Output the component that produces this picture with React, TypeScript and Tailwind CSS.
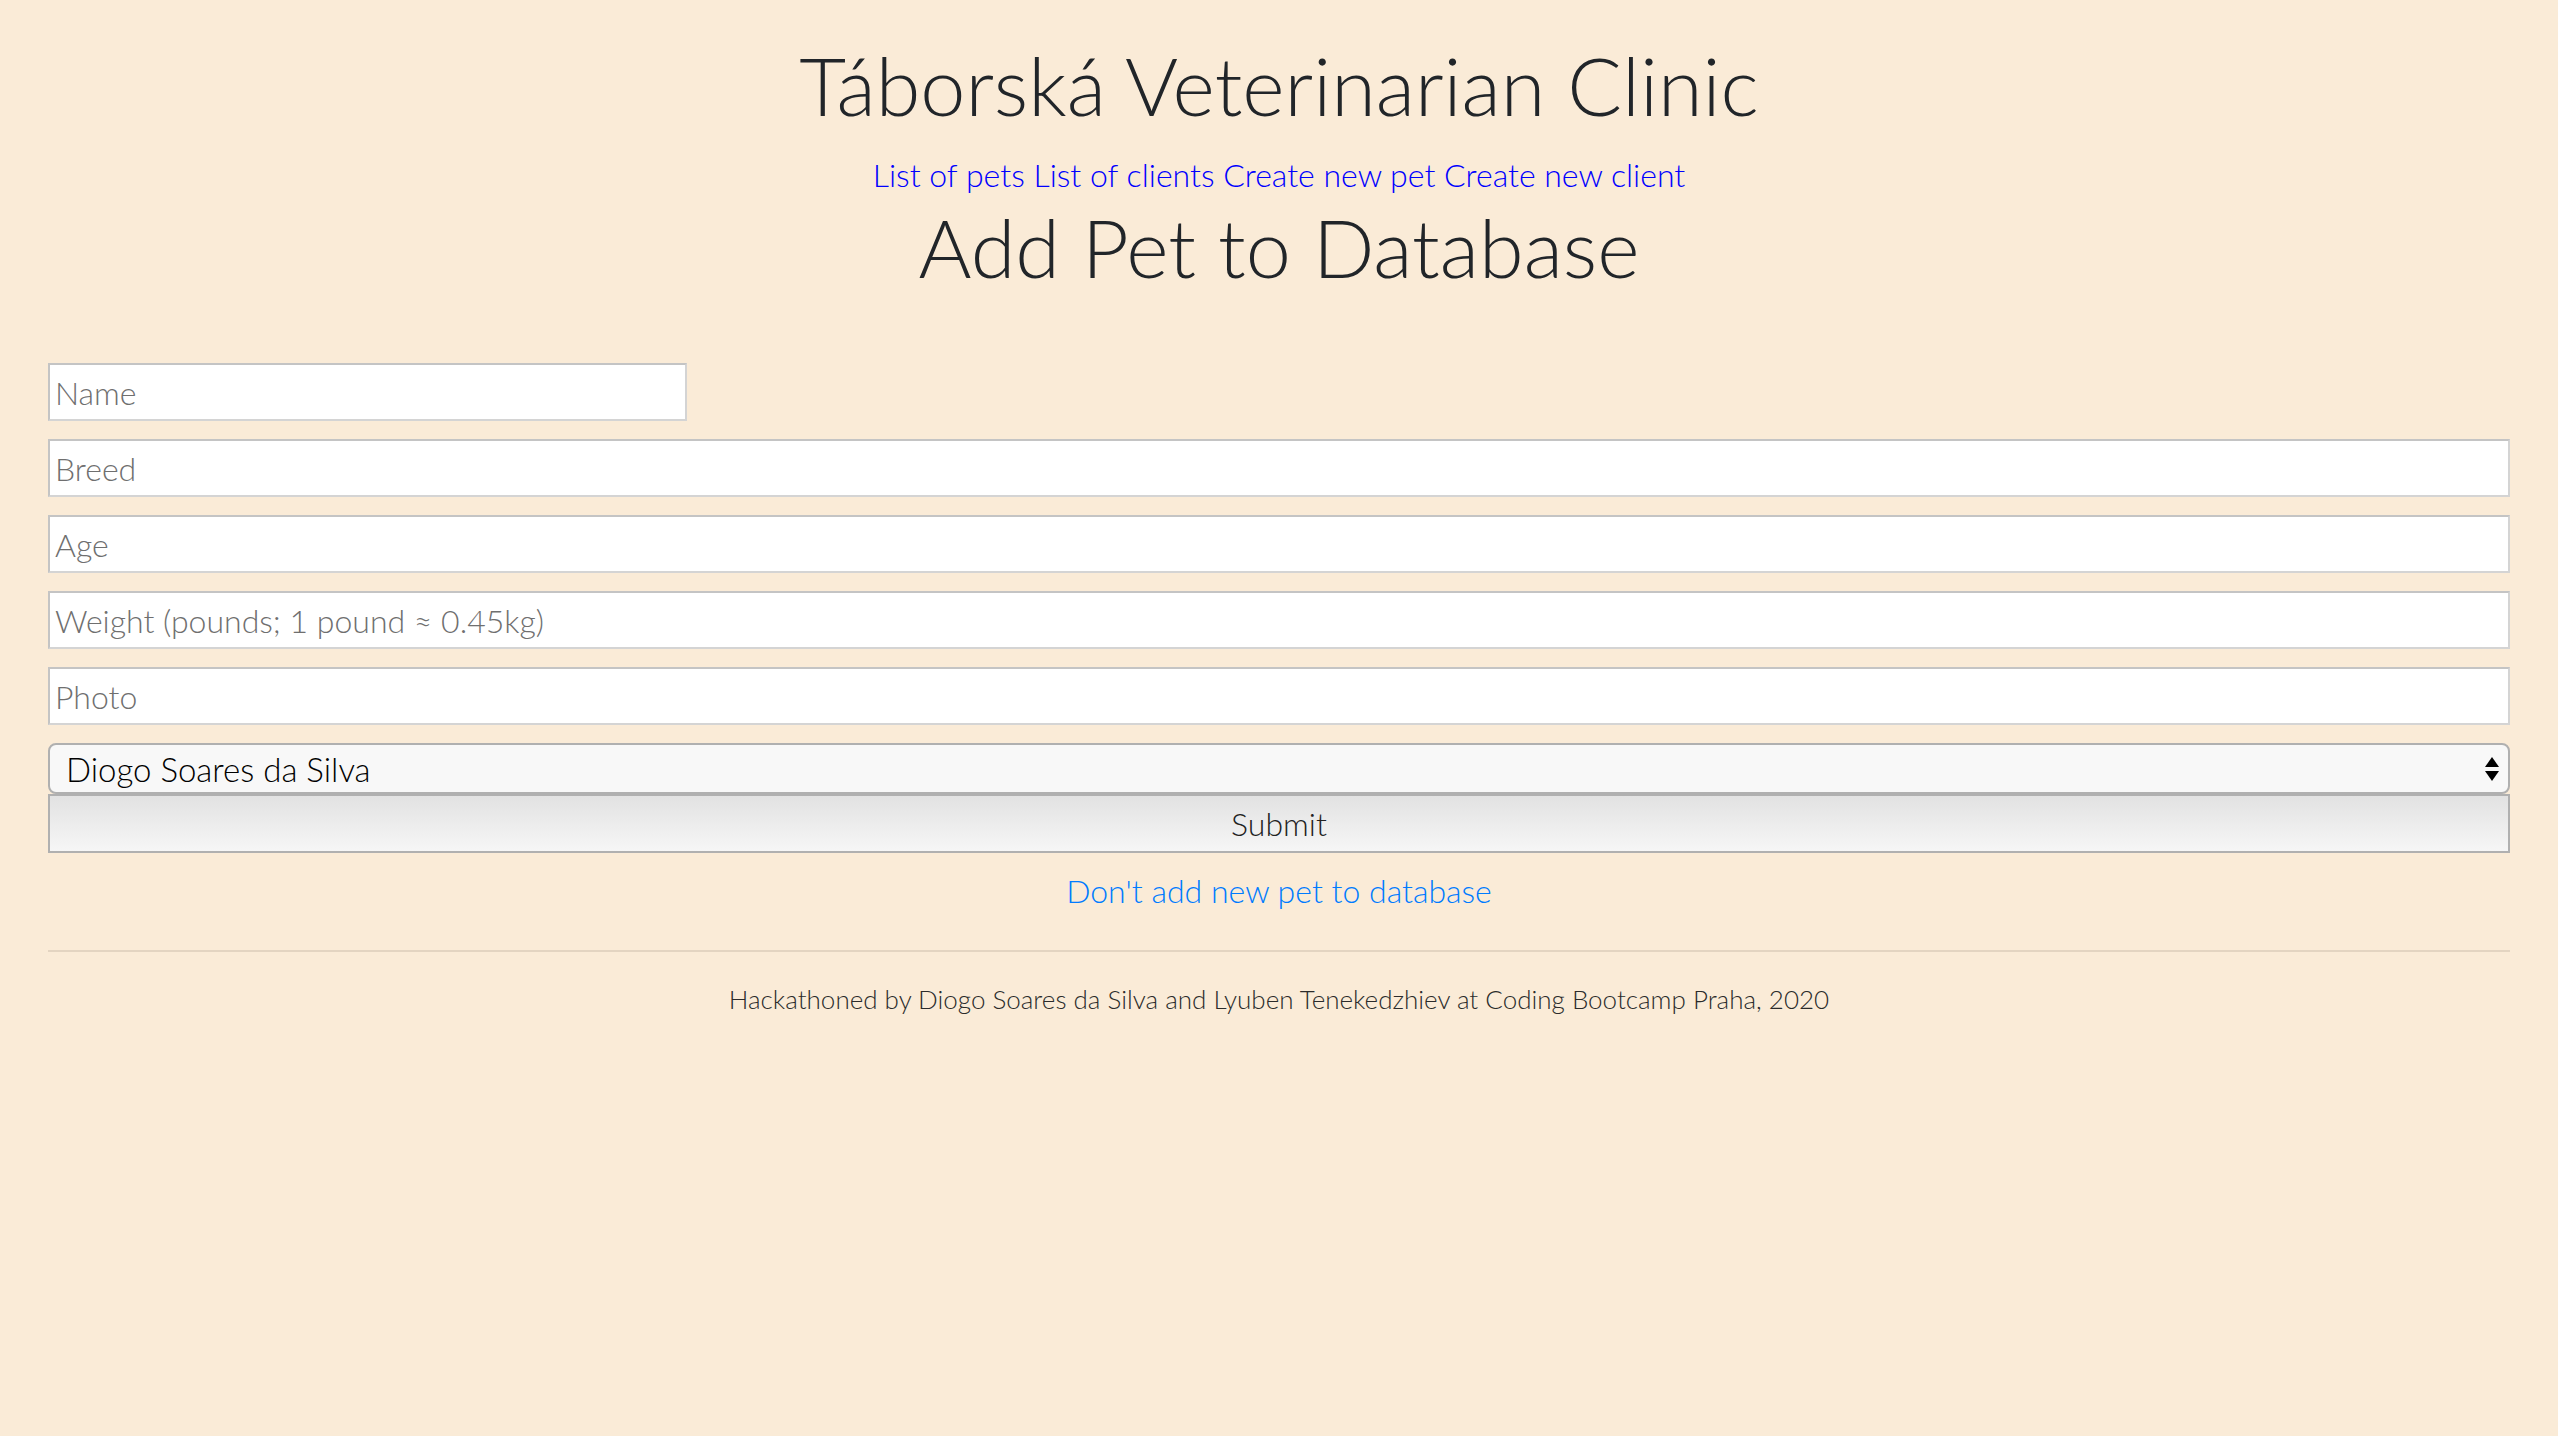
import React from "react";

// Simple pet creation page for the clinic
const fields = ["Breed", "Age", "Weight (pounds; 1 pound ≈ 0.45kg)", "Photo"];

const navLinks = ["List of pets", "List of clients", "Create new pet", "Create new client"];

export default function App() {
    return (
        <div className="min-h-screen bg-[#faebd7] text-[#212529] font-['Lato','Noto_Sans',sans-serif] font-light">
            <header className="text-center pt-[36px]">
                <h1 className="text-[81px] leading-[97px] font-light">Táborská Veterinarian Clinic</h1>
                <nav className="mt-[23px] text-[32px] leading-[38px]">
                    {navLinks.map((link, index) => (
                        <React.Fragment key={index}>
                            <a href="#" className="text-[#0000ff]">{link}</a>
                            {index < navLinks.length - 1 && " "}
                        </React.Fragment>
                    ))}
                </nav>
                <h2 className="mt-[4px] text-[81px] leading-[97px] font-light">Add Pet to Database</h2>
            </header>

            <form className="px-[48px] mt-[68px] flex flex-col">
                <input
                    placeholder="Name"
                    className="w-[639px] h-[58px] bg-white border-2 border-[#d4d4d4] border-t-[#c4c4c4] border-l-[#c4c4c4] px-[5px] text-[32px] placeholder:text-[#6f6f6f] outline-none"
                />
                {fields.map((field, index) => (
                    <input
                        key={index}
                        placeholder={field}
                        className="mt-[18px] w-full h-[58px] bg-white border-2 border-[#d4d4d4] border-t-[#c4c4c4] border-l-[#c4c4c4] px-[5px] text-[32px] placeholder:text-[#6f6f6f] outline-none"
                    />
                ))}
                <div className="relative mt-[18px]">
                    <select className="appearance-none w-full h-[51px] bg-[#f8f8f8] border-2 border-[#b0b0b0] rounded-[8px] pl-[16px] text-[33px] text-black font-light outline-none">
                        <option>Diogo Soares da Silva</option>
                    </select>
                    <svg className="absolute right-[8px] top-[12px] pointer-events-none" width="20" height="28" viewBox="0 0 20 28">
                        <polygon points="10,2 17,12 3,12" fill="#000"/>
                        <polygon points="3,16 17,16 10,26" fill="#000"/>
                    </svg>
                </div>
                <button
                    type="button"
                    className="w-full h-[59px] border-2 border-[#b0b0b0] bg-gradient-to-b from-[#e2e2e2] to-[#f6f6f6] text-[32px] text-[#222] font-light"
                >
                    Submit
                </button>
            </form>

            <div className="text-center mt-[19px]">
                <a href="#" className="text-[32px] leading-[38px] text-[#007bff]">Don't add new pet to database</a>
            </div>

            <footer className="px-[48px] mt-[40px]">
                <hr className="border-0 border-t-2 border-[#e3d4c1]"/>
                <p className="text-center text-[26px] leading-[31px] mt-[32px] text-[#2b2b2b]">
                    Hackathoned by Diogo Soares da Silva and Lyuben Tenekedzhiev at Coding Bootcamp Praha, 2020
                </p>
            </footer>
        </div>
    );
}
